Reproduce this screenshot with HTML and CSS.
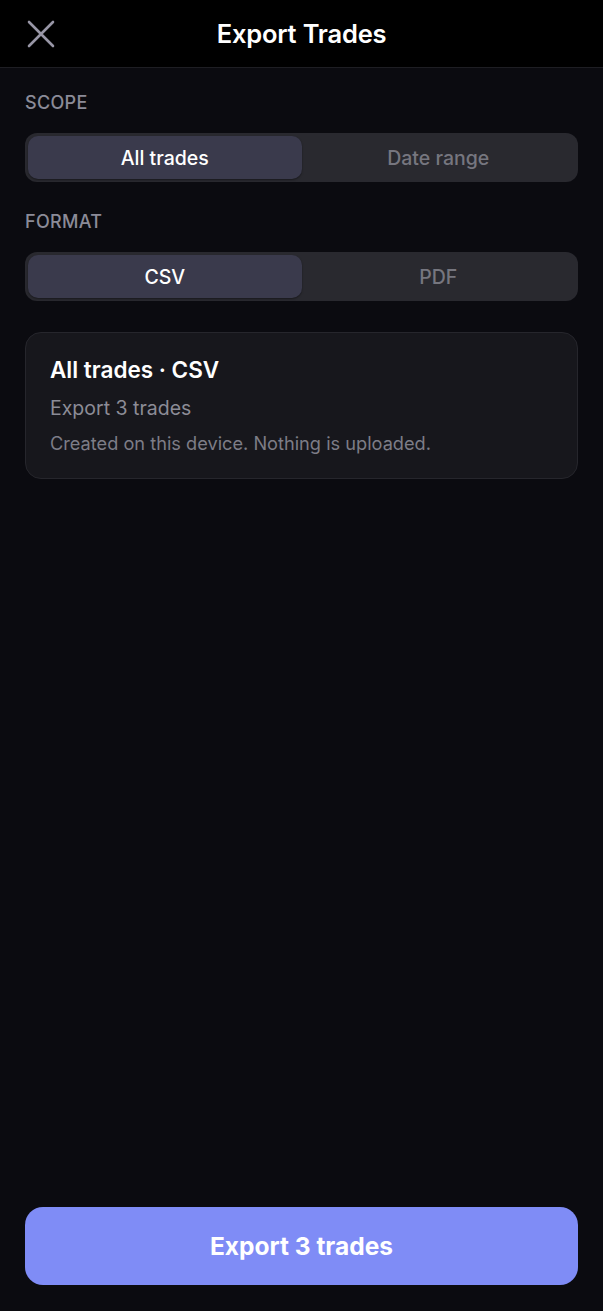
FILE: index.html
```html
<!DOCTYPE html>
<html lang="en">
<head>
  <meta charset="UTF-8">
  <meta name="viewport" content="width=device-width, initial-scale=1.0">
  <title>Export Trades</title>
  <link rel="stylesheet" href="styles.css">
</head>
<body>
  <div class="screen">
    <!-- Barre du haut -->
    <header class="topbar">
      <button class="close-btn" aria-label="Close">
        <svg width="28" height="28" viewBox="0 0 28 28">
          <path d="M2 2 L26 26 M26 2 L2 26" stroke="#9896a6" stroke-width="2.6" stroke-linecap="round" fill="none"/>
        </svg>
      </button>
      <h1>Export Trades</h1>
    </header>

    <main class="content">
      <div class="section-label">SCOPE</div>
      <div class="segmented">
        <div class="segment active">All trades</div>
        <div class="segment">Date range</div>
      </div>

      <div class="section-label">FORMAT</div>
      <div class="segmented">
        <div class="segment active">CSV</div>
        <div class="segment">PDF</div>
      </div>

      <div class="summary-card">
        <div class="summary-title">All trades · CSV</div>
        <div class="summary-count">Export 3 trades</div>
        <div class="summary-note">Created on this device. Nothing is uploaded.</div>
      </div>

      <button class="export-btn">Export 3 trades</button>
    </main>
  </div>
</body>
</html>
```

FILE: styles.css
```css
* {
  box-sizing: border-box;
}

body {
  margin: 0;
  background-color: #0b0b10;
  color: white;
  font-family: Inter, "Noto Sans", sans-serif;
}

.screen {
  min-height: 1311px;
  display: flex;
  flex-direction: column;
}

.topbar {
  height: 68px;
  background-color: #000000;
  border-bottom: 1px solid #1e1e23;
  display: flex;
  align-items: center;
  justify-content: center;
  position: relative;
}
.topbar h1 {
  margin: 0;
  font-size: 25.5px;
  font-weight: 600;
  letter-spacing: -0.2px;
}
.close-btn {
  position: absolute;
  left: 27px;
  top: 20px;
  background: none;
  border: none;
  padding: 0;
  width: 28px;
  height: 28px;
}

.content {
  flex: 1;
  display: flex;
  flex-direction: column;
  padding: 24px 25px 26px;
}

.section-label {
  font-size: 18px;
  line-height: 22px;
  font-weight: 500;
  color: #8b8b98;
  letter-spacing: 0.3px;
  margin-bottom: 19px;
}

.segmented {
  display: flex;
  height: 49px;
  padding: 3px;
  background-color: #29292f;
  border-radius: 12px;
  margin-bottom: 29px;
}
.segment {
  flex: 1;
  display: flex;
  align-items: center;
  justify-content: center;
  font-size: 19.5px;
  font-weight: 500;
  color: #76767f;
  border-radius: 10px;
}
.segment.active {
  background-color: #3a3a4c;
  color: #ffffff;
  box-shadow: 0 1px 2px rgba(0, 0, 0, 0.4);
}

.summary-card {
  margin-top: 2px;
  background-color: #17171c;
  border: 1px solid #26262c;
  border-radius: 16px;
  padding: 22px 24px 0;
  height: 147px;
}
.summary-title {
  font-size: 22.5px;
  line-height: 30px;
  font-weight: 600;
  color: #ffffff;
  margin-bottom: 10px;
}
.summary-count {
  font-size: 19.5px;
  line-height: 26px;
  color: #8c8c96;
  margin-bottom: 10px;
}
.summary-note {
  font-size: 18.2px;
  line-height: 24px;
  color: #7d7d87;
}

.export-btn {
  margin-top: auto;
  height: 78px;
  border: none;
  border-radius: 18px;
  background-color: #7f8cf6;
  color: #ffffff;
  font-family: Inter, "Noto Sans", sans-serif;
  font-size: 24.5px;
  font-weight: 700;
}
```
